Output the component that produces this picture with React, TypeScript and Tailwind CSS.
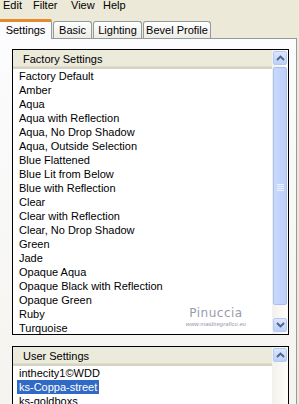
import { ReactNode } from "react";

const factoryPresets = [
    "Factory Default",
    "Amber",
    "Aqua",
    "Aqua with Reflection",
    "Aqua, No Drop Shadow",
    "Aqua, Outside Selection",
    "Blue Flattened",
    "Blue Lit from Below",
    "Blue with Reflection",
    "Clear",
    "Clear with Reflection",
    "Clear, No Drop Shadow",
    "Green",
    "Jade",
    "Opaque Aqua",
    "Opaque Black with Reflection",
    "Opaque Green",
    "Ruby",
    "Turquoise",
];

const userPresets = ["inthecity1©WDD", "ks-Coppa-street", "ks-goldboxs"];

function Chevron({ up }: { up: boolean }) {
    return (
        <svg width="9" height="6" viewBox="0 0 9 6" className="block">
            <path
                d={up ? "M1 5 L4.5 1.5 L8 5" : "M1 1 L4.5 4.5 L8 1"}
                fill="none"
                stroke="#4d6185"
                strokeWidth="1.8"
            />
        </svg>
    );
}

function ScrollButton({ up }: { up: boolean }) {
    return (
        <div className="mx-[1px] h-[14px] flex-none rounded-[2px] border border-[#b4c8f6] bg-gradient-to-b from-[#dbe6fd] to-[#bcd0fa] flex items-center justify-center">
            <Chevron up={up} />
        </div>
    );
}

function ListBox({ title, height, children, scroll }: { title: string; height: string; children: ReactNode; scroll: ReactNode }) {
    return (
        <div className={`relative w-[277px] ${height} border border-black bg-white flex overflow-hidden`}>
            <div className="flex-1 min-w-0 flex flex-col">
                {/* Column header */}
                <div className="h-[19px] flex-none flex items-center pl-[10px] bg-[#ebeadb] border-b-[2px] border-[#d6d2c2] shadow-[inset_0_-1px_0_#e2decd]">
                    {title}
                </div>
                <div className="flex-1 min-h-0">{children}</div>
            </div>
            {/* Vertical scrollbar */}
            <div className="w-[16px] flex-none flex flex-col pt-[1px] pb-[2px] bg-gradient-to-r from-[#f3f1ec] to-[#fdfdfa]">
                {scroll}
            </div>
        </div>
    );
}

export default function App() {
    return (
        <div className="relative w-[299px] h-[404px] overflow-hidden bg-[#ece9d8] text-[11px] leading-[14px] text-black flex flex-col" style={{ fontFamily: '"Liberation Sans", Arial, sans-serif' }}>
            {/* Menu bar */}
            <div className="h-[14px] flex-none flex items-start leading-[11px] pl-[3px]">
                <span className="w-[30px]">Edit</span>
                <span className="w-[38px]">Filter</span>
                <span className="w-[32px]">View</span>
                <span>Help</span>
            </div>

            {/* Tabs */}
            <div className="h-[24px] flex-none flex items-end">
                <div className="w-[52px] h-[20px] border-t-[3px] border-[#e68b2c] bg-[#fcfcfe] border-r border-r-[#919b9c] flex justify-center pt-[1px] rounded-tr-[2px] relative z-10 -mb-[1px]">
                    Settings
                </div>
                <div className="ml-[1px] w-[39px] h-[17px] border border-b-0 border-[#919b9c] rounded-t-[3px] bg-gradient-to-b from-white to-[#ecebe5] flex justify-center pt-[1px]">
                    Basic
                </div>
                <div className="ml-[1px] w-[49px] h-[17px] border border-b-0 border-[#919b9c] rounded-t-[3px] bg-gradient-to-b from-white to-[#ecebe5] flex justify-center pt-[1px]">
                    Lighting
                </div>
                <div className="ml-[1px] w-[68px] h-[17px] border border-b-0 border-[#919b9c] rounded-t-[3px] bg-gradient-to-b from-white to-[#ecebe5] flex justify-center pt-[1px]">
                    Bevel Profile
                </div>
            </div>

            {/* Tab page */}
            <div className="w-[297px] flex-1 border-t border-r border-[#919b9c] bg-gradient-to-b from-[#fcfcfe] to-[#f4f3ee] pl-[12px] pt-[10px] flex flex-col gap-[11px]">
                <ListBox
                    title="Factory Settings"
                    height="h-[286px]"
                    scroll={
                        <>
                            <ScrollButton up />
                            <div className="mx-[1px] mt-[2px] h-[238px] flex-none rounded-[2px] border border-[#a9bff2] bg-gradient-to-r from-[#c8d9fd] to-[#bdd0fb] flex flex-col items-center justify-center gap-[1px] pt-[2px]">
                                <div className="w-[7px] h-[1px] bg-[#eef3fe]" />
                                <div className="w-[7px] h-[1px] bg-[#eef3fe]" />
                                <div className="w-[7px] h-[1px] bg-[#eef3fe]" />
                                <div className="w-[7px] h-[1px] bg-[#eef3fe]" />
                            </div>
                            <div className="flex-1" />
                            <ScrollButton up={false} />
                        </>
                    }
                >
                    {factoryPresets.map((name) => (
                        <div key={name} className="h-[14px] pl-[6px] whitespace-nowrap">
                            {name}
                        </div>
                    ))}
                </ListBox>

                <ListBox
                    title="User Settings"
                    height="h-[80px]"
                    scroll={<ScrollButton up />}
                >
                    {userPresets.map((name, i) => (
                        <div key={name} className="h-[14px] pl-[4px] whitespace-nowrap">
                            <span className={i === 1 ? "inline-block px-[2px] bg-[#316ac5] text-white" : "inline-block px-[2px]"}>{name}</span>
                        </div>
                    ))}
                </ListBox>
            </div>

            {/* Watermark overlay */}
            <div className="absolute left-[183px] top-[306px] w-[66px] flex flex-col items-center text-[#979aab] pointer-events-none">
                <span className="text-[12px] leading-[14px] tracking-[0.5px]" style={{ fontFamily: '"DejaVu Sans", sans-serif' }}>Pinuccia</span>
                <span className="text-[6px] leading-[7px] italic mt-[1px]">www.maidiregrafico.eu</span>
            </div>
        </div>
    );
}
